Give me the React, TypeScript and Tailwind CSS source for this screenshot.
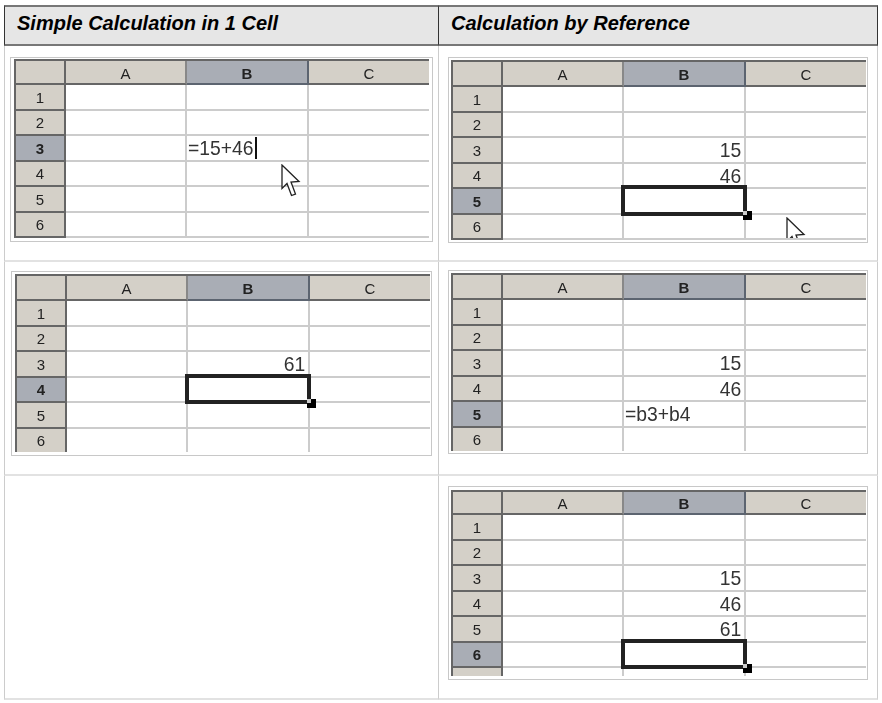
import React from "react";

const COLS = ["A", "B", "C"];
const ROWS = [1, 2, 3, 4, 5, 6];

type CellMap = Record<number, string>;

function Arrow() {
  return (
    <svg className="block" width="20" height="33" viewBox="0 0 20 33">
      <path
        d="M1 1 L1 24.5 L6 19.5 L10.5 31.5 L14.5 30 L10 18 L18 17.5 Z"
        fill="#fff"
        stroke="#222"
        strokeWidth="1.3"
        strokeLinejoin="miter"
      />
    </svg>
  );
}

function Sheet({
  active,
  values = {},
  selected = false,
  editing,
  caret = false,
  stub = false,
  sheetClass,
  headClass,
  children,
}: {
  active: number;
  values?: CellMap;
  selected?: boolean;
  editing?: string;
  caret?: boolean;
  stub?: boolean;
  sheetClass: string;
  headClass: string;
  children?: React.ReactNode;
}) {
  const head = "flex items-center justify-center text-[15px] leading-none text-[#222]";
  return (
    <div className={`relative overflow-hidden font-['Liberation_Sans',sans-serif] blur-[0.35px] ${sheetClass}`}>
      <div className="grid w-[415px] grid-cols-[52px_121px_122px_120px] border-t-2 border-[#666]">
        <div className={`${headClass} border-x-2 border-b-2 border-[#666] bg-[#d4d0c8]`} />
        {COLS.map((c) => (
          <div
            key={c}
            className={`${head} ${headClass} border-b-2 pt-[2px] ${
              c === "B"
                ? "border-r-2 border-[#5c6470] bg-[#a9adb5] font-bold text-[#111]"
                : c === "A"
                  ? "border-r-2 border-b-[#666] border-r-[#888] bg-[#d4d0c8]"
                  : "border-b-[#666] bg-[#d4d0c8]"
            }`}
          >
            {c}
          </div>
        ))}
        {ROWS.map((r) => (
          <React.Fragment key={r}>
            <div
              className={`${head} h-[25.5px] border-x-2 border-b-2 border-[#666] pt-[1px] ${
                r === active ? "bg-[#a9adb5] font-bold text-[#111]" : "bg-[#d4d0c8]"
              }`}
            >
              {r}
            </div>
            {COLS.map((c) => {
              const isB = c === "B";
              const val = isB ? values[r] : undefined;
              const isEdit = isB && r === active && editing;
              const isSel = isB && r === active && selected;
              return (
                <div
                  key={c}
                  className={`relative flex h-[25.5px] items-center justify-end border-b-2 border-[#ccc] bg-white pr-[3px] text-[21px] leading-none text-[#333] ${
                    c === "C" ? "" : "border-r-2"
                  }`}
                >
                  {val && <span className="inline-block origin-right scale-x-[0.92]">{val}</span>}
                  {isEdit && (
                    <div className="absolute inset-0 flex items-center pl-[1px]">
                      <span className="inline-block origin-left scale-x-[0.92]">{editing}</span>
                      {caret && <span className="-ml-[4px] h-[22px] w-[2px] bg-[#111]" />}
                    </div>
                  )}
                  {isSel && (
                    <div className="absolute -left-[3px] -right-[3px] -top-[4px] -bottom-[3px] z-10 border-[4px] border-[#222]">
                      <div className="absolute -right-[9px] -bottom-[8px] size-[9px] bg-black">
                        <div className="size-[4px] bg-[#ccc]" />
                      </div>
                    </div>
                  )}
                </div>
              );
            })}
          </React.Fragment>
        ))}
        {stub && (
          <>
            <div className="h-[12px] border-x-2 border-[#666] bg-[#d4d0c8]" />
            <div className="h-[12px] border-r-2 border-[#ccc] bg-white" />
            <div className="h-[12px] border-r-2 border-[#ccc] bg-white" />
            <div className="h-[12px] bg-white" />
          </>
        )}
      </div>
      {children}
    </div>
  );
}

function Frame({ className, children }: { className: string; children: React.ReactNode }) {
  return <div className={`border border-[#c8c8c8] bg-white ${className}`}>{children}</div>;
}

export default function App() {
  const headCell =
    "h-[41px] border-t-2 border-b-2 border-t-[#777] border-b-[#777] bg-[#e6e6e6] pt-[3px] font-['Liberation_Sans',sans-serif] text-[20px] font-bold italic leading-[26px] text-black";
  const bodyRow = "border-b-2 border-[#e2e2e2] border-r border-r-[#ccc]";
  return (
    <div className="min-h-[703px] bg-white pl-[4px] pt-[5px]">
      <div className="grid w-[874px] grid-cols-[435px_439px]">
        <div className={`${headCell} border-x border-l-[#333] border-r-[#333] pl-[12px]`}>Simple Calculation in 1 Cell</div>
        <div className={`${headCell} border-r border-r-[#333] pl-[12px]`}>Calculation by Reference</div>

        <div className={`h-[216px] border-l border-l-[#ccc] pl-[5px] pt-[11px] ${bodyRow}`}>
          <Frame className="h-[185px] w-[423px] pl-[3px] pt-[1px]">
            <Sheet active={3} editing="=15+46" caret headClass="h-[24px]" sheetClass="h-[179px] w-[415px]">
              <div className="absolute left-[267px] top-[105px]">
                <Arrow />
              </div>
            </Sheet>
          </Frame>
        </div>
        <div className={`h-[216px] pl-[9px] pt-[11px] ${bodyRow}`}>
          <Frame className="h-[186px] w-[420px] pl-[2px] pt-[2px]">
            <Sheet active={5} selected values={{ 3: "15", 4: "46" }} headClass="h-[25px]" sheetClass="h-[180px] w-[415px]">
              <div className="absolute left-[335px] top-[157px] h-[21px] overflow-hidden">
                <Arrow />
              </div>
            </Sheet>
          </Frame>
        </div>

        <div className={`h-[214px] border-l border-l-[#ccc] pl-[6px] pt-[9px] ${bodyRow}`}>
          <Frame className="h-[185px] w-[421px] pl-[3px] pt-[2px]">
            <Sheet active={4} selected values={{ 3: "61" }} headClass="h-[25px]" sheetClass="h-[178px] w-[415px]" />
          </Frame>
        </div>
        <div className={`h-[214px] pl-[9px] pt-[8px] ${bodyRow}`}>
          <Frame className="h-[184px] w-[420px] pl-[2px] pt-[2px]">
            <Sheet active={5} editing="=b3+b4" values={{ 3: "15", 4: "46" }} headClass="h-[25px]" sheetClass="h-[178px] w-[415px]" />
          </Frame>
        </div>

        <div className={`h-[224px] border-l border-l-[#ccc] ${bodyRow}`} />
        <div className={`h-[224px] pl-[9px] pt-[10px] ${bodyRow}`}>
          <Frame className="h-[194px] w-[420px] pl-[2px] pt-[3px]">
            <Sheet active={6} selected stub values={{ 3: "15", 4: "46", 5: "61" }} headClass="h-[23px]" sheetClass="h-[186px] w-[415px]" />
          </Frame>
        </div>
      </div>
    </div>
  );
}
